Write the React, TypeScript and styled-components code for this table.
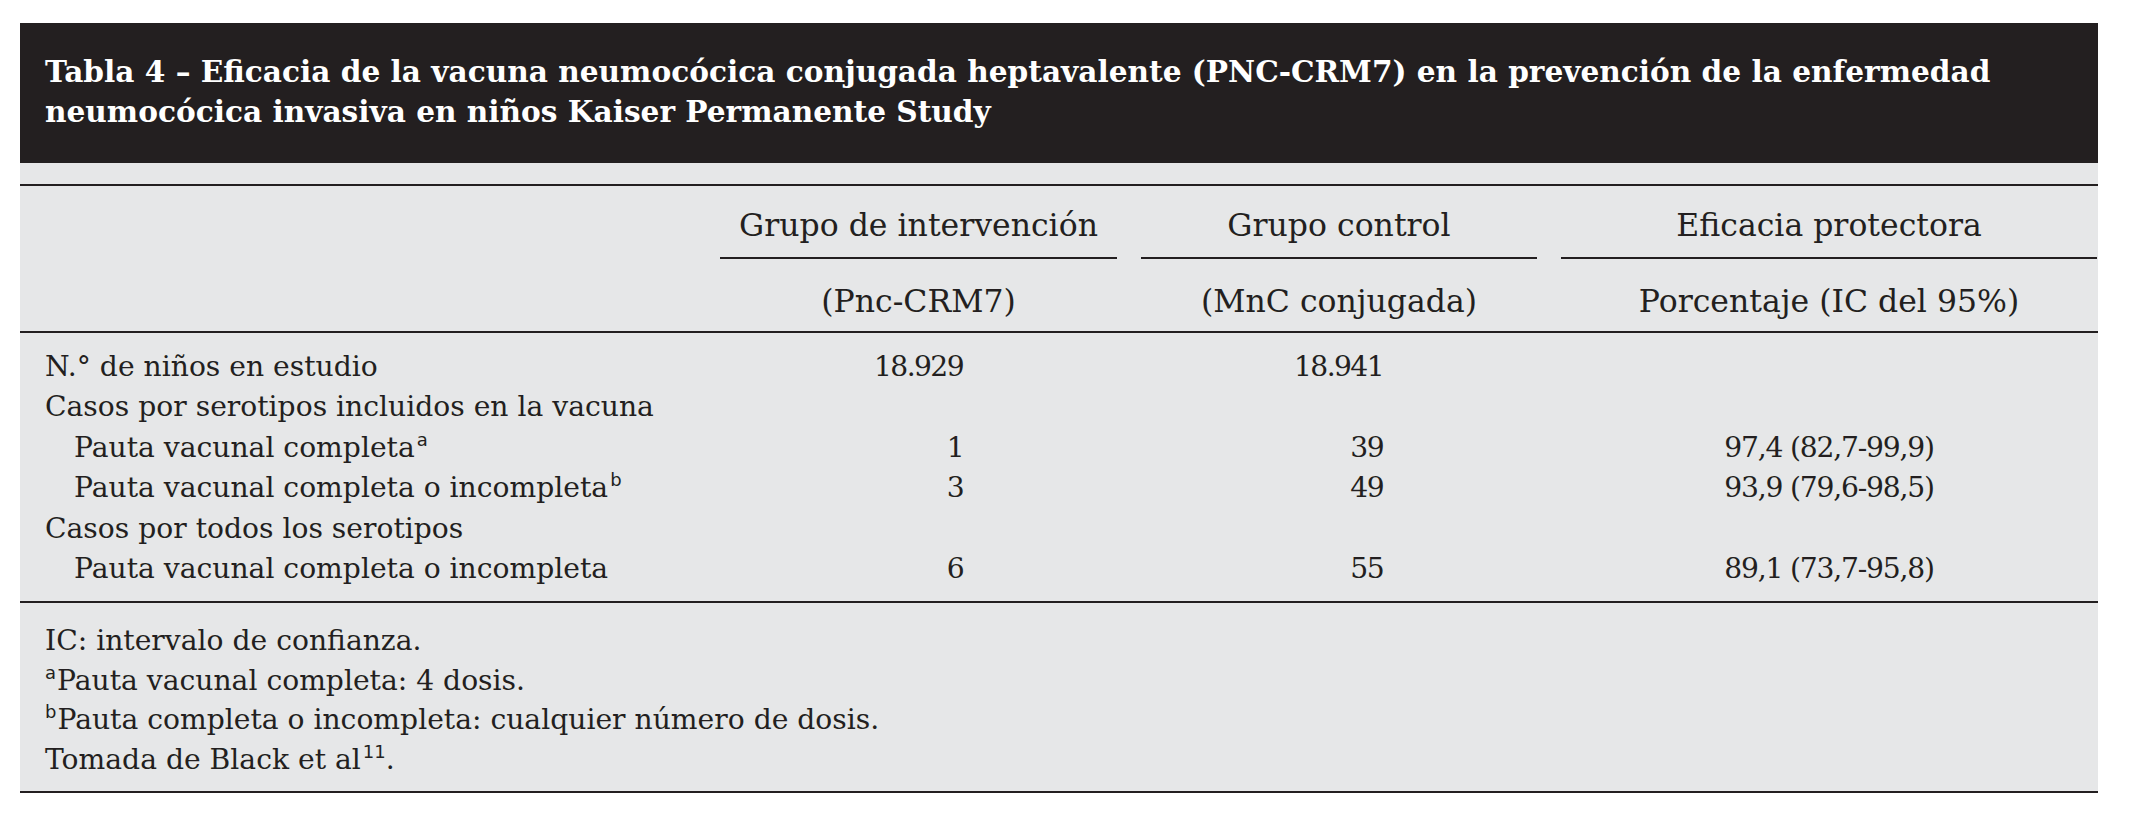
import React from "react";
import styled, { createGlobalStyle } from "styled-components";

const GlobalStyle = createGlobalStyle`
  html, body {
    margin: 0;
    padding: 0;
    background: #ffffff;
  }
  body {
    font-family: "DejaVu Serif", "Liberation Serif", serif;
    color: #231f20;
  }
`;

const Page = styled.div`
  padding: 23px 31px 36px 20px;
  width: 2078px;
`;

const TableBox = styled.section`
  width: 2078px;
  background: #e6e7e8;
`;

const Caption = styled.h1`
  margin: 0;
  background: #231f20;
  color: #ffffff;
  padding: 29px 25px 31px 25px;
  font-family: "DejaVu Serif", serif;
  font-weight: bold;
  font-size: 29.6px;
  line-height: 40px;
  white-space: nowrap;
`;

const Body = styled.div`
  padding-top: 21px;
`;

const GRID = "676px 397px 396px 536px";

const HeadGrid = styled.div`
  display: grid;
  grid-template-columns: ${GRID};
  column-gap: 24px;
  border-top: 2px solid #231f20;
  border-bottom: 2px solid #231f20;
`;

const HeadCell = styled.div<{ $row: 1 | 2; $col: number }>`
  grid-column: ${(p) => p.$col};
  grid-row: ${(p) => p.$row};
  text-align: center;
  font-size: 31.5px;
  line-height: 40px;
  padding: ${(p) => (p.$row === 1 ? "19px 0 12px" : "22px 0 10px")};
  border-bottom: ${(p) => (p.$row === 1 ? "2px solid #231f20" : "none")};
  white-space: nowrap;
`;

const Rows = styled.div`
  display: grid;
  grid-template-columns: ${GRID};
  column-gap: 24px;
  grid-auto-rows: 40.4px;
  padding: 14px 0 12px;
  border-bottom: 2px solid #231f20;
  font-size: 28.2px;
  line-height: 40.4px;
`;

const Label = styled.div<{ $indent?: boolean }>`
  grid-column: 1;
  padding-left: ${(p) => (p.$indent ? "54px" : "25px")};
  white-space: nowrap;
`;

const Num = styled.div<{ $col: number }>`
  grid-column: ${(p) => p.$col};
  text-align: right;
  padding-right: 154px;
  letter-spacing: -1.6px;
  white-space: nowrap;
`;

const Effect = styled.div`
  grid-column: 4;
  text-align: center;
  letter-spacing: -1.2px;
  white-space: nowrap;
`;

const Notes = styled.div`
  padding: 18px 25px 12px;
  border-bottom: 2px solid #231f20;
  font-size: 28.2px;
  line-height: 39.5px;
`;

const Note = styled.div`
  white-space: nowrap;
`;

const Sup = styled.sup<{ $after?: boolean }>`
  font-family: "DejaVu Sans", "Liberation Sans", sans-serif;
  font-size: 18px;
  line-height: 0;
  vertical-align: 0.62em;
  margin: ${(p) => (p.$after ? "0 0 0 2px" : "0 1px 0 0")};
`;

type Row = {
  label: React.ReactNode;
  indent?: boolean;
  a?: string;
  b?: string;
  eff?: string;
};

const rows: Row[] = [
  { label: "N.° de niños en estudio", a: "18.929", b: "18.941" },
  { label: "Casos por serotipos incluidos en la vacuna" },
  {
    label: (
      <>
        Pauta vacunal completa<Sup $after>a</Sup>
      </>
    ),
    indent: true,
    a: "1",
    b: "39",
    eff: "97,4 (82,7-99,9)",
  },
  {
    label: (
      <>
        Pauta vacunal completa o incompleta<Sup $after>b</Sup>
      </>
    ),
    indent: true,
    a: "3",
    b: "49",
    eff: "93,9 (79,6-98,5)",
  },
  { label: "Casos por todos los serotipos" },
  {
    label: "Pauta vacunal completa o incompleta",
    indent: true,
    a: "6",
    b: "55",
    eff: "89,1 (73,7-95,8)",
  },
];

export default function App() {
  return (
    <>
      <GlobalStyle />
      <Page>
        <TableBox>
          <Caption>
            Tabla 4 – Eficacia de la vacuna neumocócica conjugada heptavalente (PNC-CRM7) en la prevención de la enfermedad
            <br />
            neumocócica invasiva en niños Kaiser Permanente Study
          </Caption>
          <Body>
            <HeadGrid>
              <HeadCell $row={1} $col={2}>Grupo de intervención</HeadCell>
              <HeadCell $row={1} $col={3}>Grupo control</HeadCell>
              <HeadCell $row={1} $col={4}>Eficacia protectora</HeadCell>
              <HeadCell $row={2} $col={2}>(Pnc-CRM7)</HeadCell>
              <HeadCell $row={2} $col={3}>(MnC conjugada)</HeadCell>
              <HeadCell $row={2} $col={4}>Porcentaje (IC del 95%)</HeadCell>
            </HeadGrid>
            <Rows>
              {rows.map((r, i) => (
                <React.Fragment key={i}>
                  <Label $indent={r.indent} style={{ gridRow: i + 1 }}>
                    {r.label}
                  </Label>
                  {r.a && (
                    <Num $col={2} style={{ gridRow: i + 1 }}>
                      {r.a}
                    </Num>
                  )}
                  {r.b && (
                    <Num $col={3} style={{ gridRow: i + 1 }}>
                      {r.b}
                    </Num>
                  )}
                  {r.eff && <Effect style={{ gridRow: i + 1 }}>{r.eff}</Effect>}
                </React.Fragment>
              ))}
            </Rows>
            <Notes>
              <Note>IC: intervalo de confianza.</Note>
              <Note>
                <Sup>a</Sup>Pauta vacunal completa: 4 dosis.
              </Note>
              <Note>
                <Sup>b</Sup>Pauta completa o incompleta: cualquier número de dosis.
              </Note>
              <Note>
                Tomada de Black et al<Sup $after>11</Sup>.
              </Note>
            </Notes>
          </Body>
        </TableBox>
      </Page>
    </>
  );
}
